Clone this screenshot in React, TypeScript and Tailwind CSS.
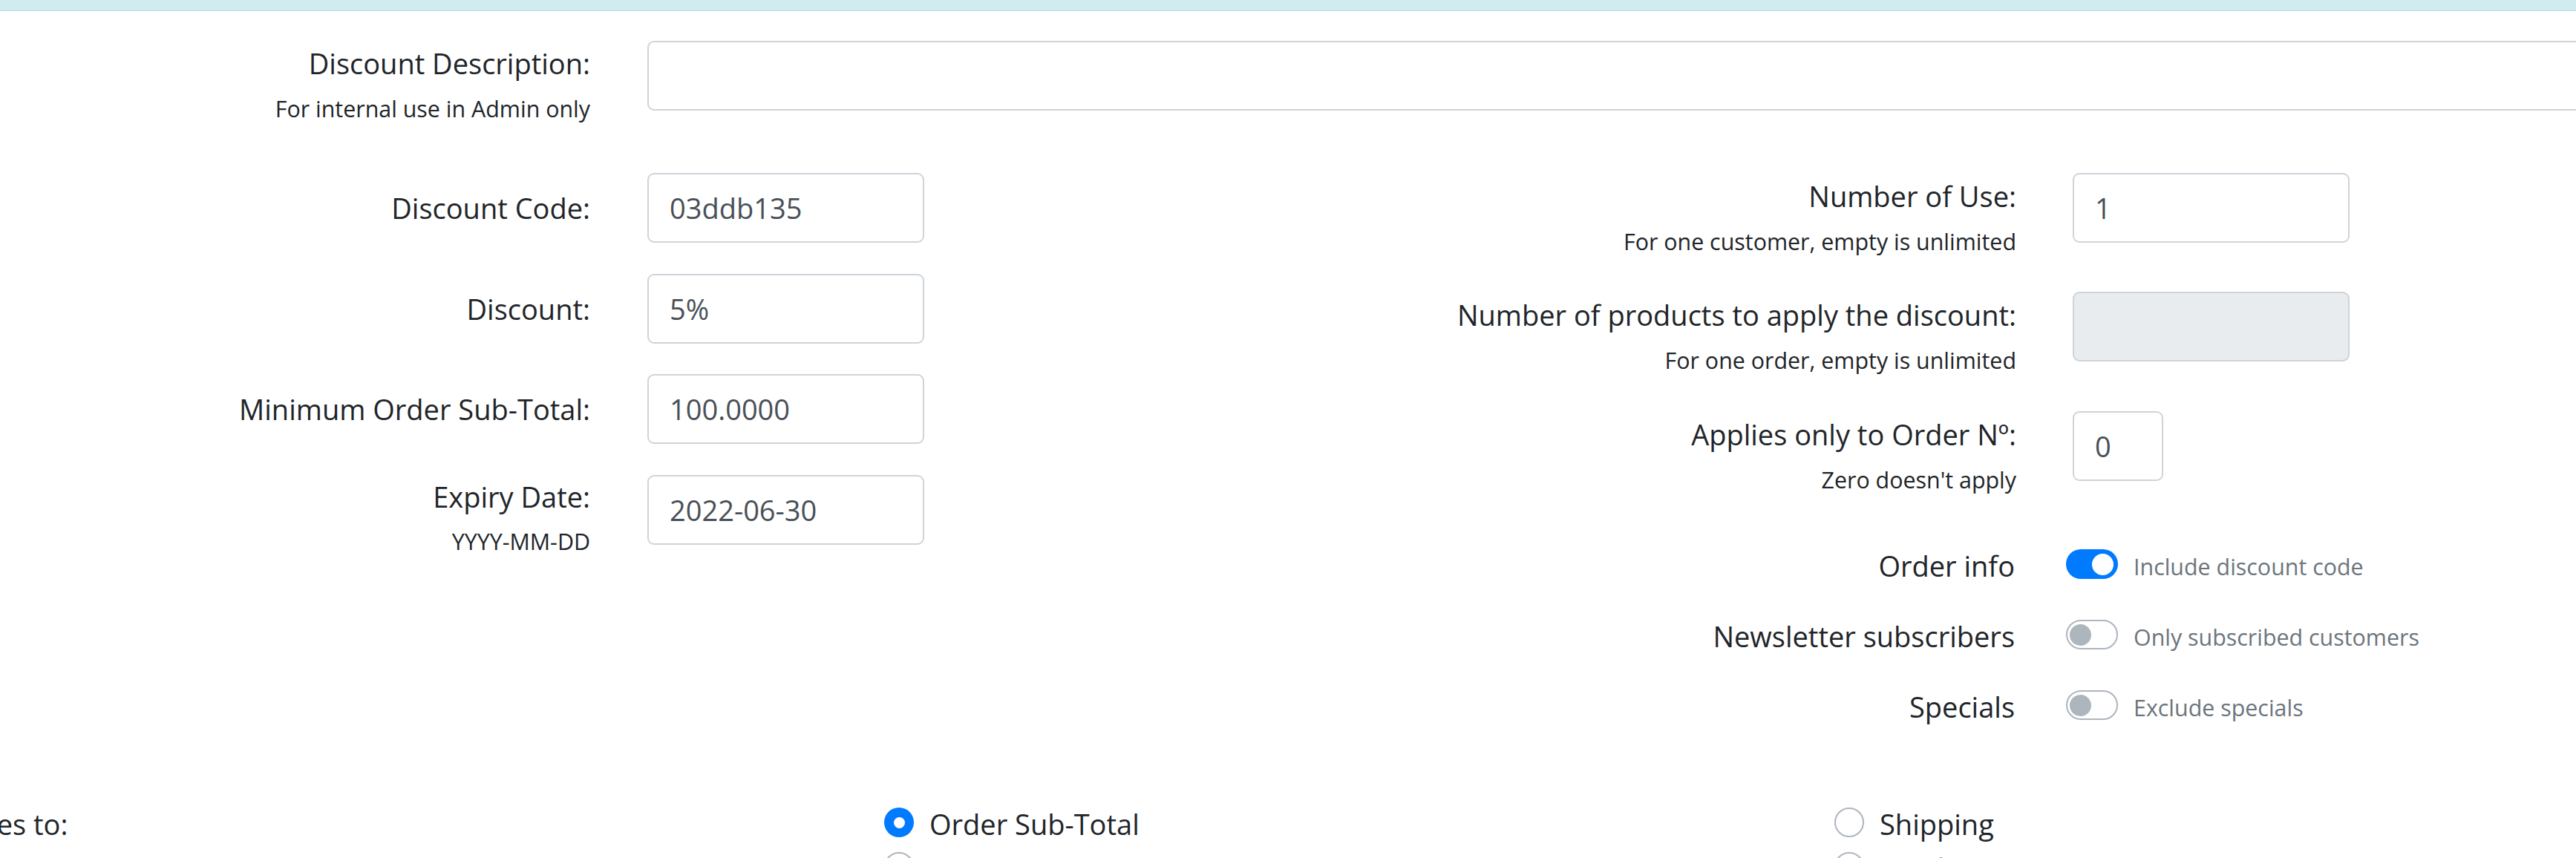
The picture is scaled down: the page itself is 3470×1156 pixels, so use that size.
import React from "react";

type InputProps = { value?: string; width?: string; disabled?: boolean };

function TextInput({ value = "", width = "w-[373px]", disabled = false }: InputProps) {
  return (
    <div
      className={`${width} ${disabled ? "bg-[#e9ecef]" : "bg-white"} flex h-[94px] shrink-0 items-center rounded-[9px] border-2 border-[#ced4da] pl-[28px] text-[38px] leading-none text-[#495057]`}
    >
      {value}
    </div>
  );
}

function SimpleRow({ label, value }: { label: string; value: string }) {
  return (
    <div className="mb-[41.5px] flex h-[94px] items-center">
      <div className="w-[795px] shrink-0 text-right text-[38px] leading-none">{label}</div>
      <div className="ml-[77px]">
        <TextInput value={value} />
      </div>
    </div>
  );
}

type HelpRowProps = { label: string; help: string; height: string; input: React.ReactNode };

function HelpRow({ label, help, height, input }: HelpRowProps) {
  return (
    <div className={`flex ${height}`}>
      <div className="flex w-[1416px] shrink-0 flex-col items-end pt-[12px]">
        <span className="text-[38px] leading-none">{label}</span>
        <span className="mt-[28px] text-[30.4px] leading-none">{help}</span>
      </div>
      <div className="ml-[76px]">{input}</div>
    </div>
  );
}

function Switch({ on }: { on: boolean }) {
  return on ? (
    <div className="flex h-[40px] w-[70px] shrink-0 items-center justify-end rounded-full bg-[#007bff] pr-[6px]">
      <div className="h-[29px] w-[29px] rounded-full bg-white" />
    </div>
  ) : (
    <div className="flex h-[40px] w-[70px] shrink-0 items-center rounded-full border-2 border-[#adb5bd] bg-white pl-[3px]">
      <div className="h-[29px] w-[29px] rounded-full bg-[#adb5bd]" />
    </div>
  );
}

function SwitchRow({ label, text, on }: { label: string; text: string; on: boolean }) {
  return (
    <div className="flex h-[95px] items-center">
      <div className="w-[1414px] shrink-0 pt-[3px] text-right text-[38px] leading-none">{label}</div>
      <div className="ml-[69px]">
        <Switch on={on} />
      </div>
      <div className="ml-[21px] pt-[8px] text-[30.4px] leading-none text-[#6c757d]">{text}</div>
    </div>
  );
}

function Radio({ label, checked }: { label: string; checked: boolean }) {
  return (
    <div className="flex h-[60px] items-center">
      {checked ? (
        <div className="flex h-[40px] w-[40px] shrink-0 items-center justify-center rounded-full bg-[#007bff]">
          <div className="h-[15px] w-[15px] rounded-full bg-white" />
        </div>
      ) : (
        <div className="h-[40px] w-[40px] shrink-0 rounded-full border-2 border-[#adb5bd] bg-white" />
      )}
      <span className="ml-[21px] pt-[3px] text-[38px] leading-none">{label}</span>
    </div>
  );
}

export default function App() {
  return (
    <div className="h-[1156px] w-[3470px] overflow-hidden bg-white font-['Open_Sans',sans-serif] text-[#212529]">
      {/* info strip */}
      <div className="h-[13px] border-b-2 border-[#bee5eb] bg-[#d1ecf1] box-content" />

      {/* description */}
      <div className="mt-[40px] flex h-[94px]">
        <div className="flex w-[795px] shrink-0 flex-col items-end pt-[11px]">
          <span className="text-[38px] leading-none">Discount Description:</span>
          <span className="mt-[28px] text-[30.4px] leading-none">For internal use in Admin only</span>
        </div>
        <div className="ml-[77px]">
          <TextInput width="w-[2700px]" />
        </div>
      </div>

      {/* main fields */}
      <div className="mt-[84px] flex">
        <div className="flex w-[1300px] shrink-0 flex-col">
          <SimpleRow label="Discount Code:" value="03ddb135" />
          <SimpleRow label="Discount:" value="5%" />
          <SimpleRow label="Minimum Order Sub-Total:" value="100.0000" />
          <div className="flex h-[94px]">
            <div className="flex w-[795px] shrink-0 flex-col items-end pt-[10px]">
              <span className="text-[38px] leading-none">Expiry Date:</span>
              <span className="mt-[27px] text-[30.4px] leading-none">YYYY-MM-DD</span>
            </div>
            <div className="ml-[77px]">
              <TextInput value="2022-06-30" />
            </div>
          </div>
        </div>

        <div className="flex flex-col">
          <HelpRow
            height="h-[160px]"
            label="Number of Use:"
            help="For one customer, empty is unlimited"
            input={<TextInput value="1" />}
          />
          <HelpRow
            height="h-[161px]"
            label="Number of products to apply the discount:"
            help="For one order, empty is unlimited"
            input={<TextInput disabled />}
          />
          <HelpRow
            height="h-[158.5px]"
            label="Applies only to Order Nº:"
            help="Zero doesn't apply"
            input={<TextInput value="0" width="w-[122px]" />}
          />
          <SwitchRow label="Order info" text="Include discount code" on />
          <SwitchRow label="Newsletter subscribers" text="Only subscribed customers" on={false} />
          <SwitchRow label="Specials" text="Exclude specials" on={false} />
        </div>
      </div>

      {/* applies to */}
      <div className="ml-[-124px] mt-[80.5px] grid w-[3840px] grid-cols-3">
        <div className="flex flex-col px-[35px]">
          <div className="-ml-[5px] flex h-[60px] items-center">
            <span className="pt-[3px] text-[38px] leading-none">Applies to:</span>
          </div>
          <div className="-ml-[5px] flex h-[60px] items-center">
            <span className="pt-[3px] text-[38px] leading-none">Products:</span>
          </div>
        </div>
        <div className="flex flex-col px-[35px]">
          <Radio label="Order Sub-Total" checked />
          <Radio label="Order Total" checked={false} />
        </div>
        <div className="flex flex-col px-[35px]">
          <Radio label="Shipping" checked={false} />
          <Radio label="Tax fee" checked={false} />
        </div>
      </div>
    </div>
  );
}
